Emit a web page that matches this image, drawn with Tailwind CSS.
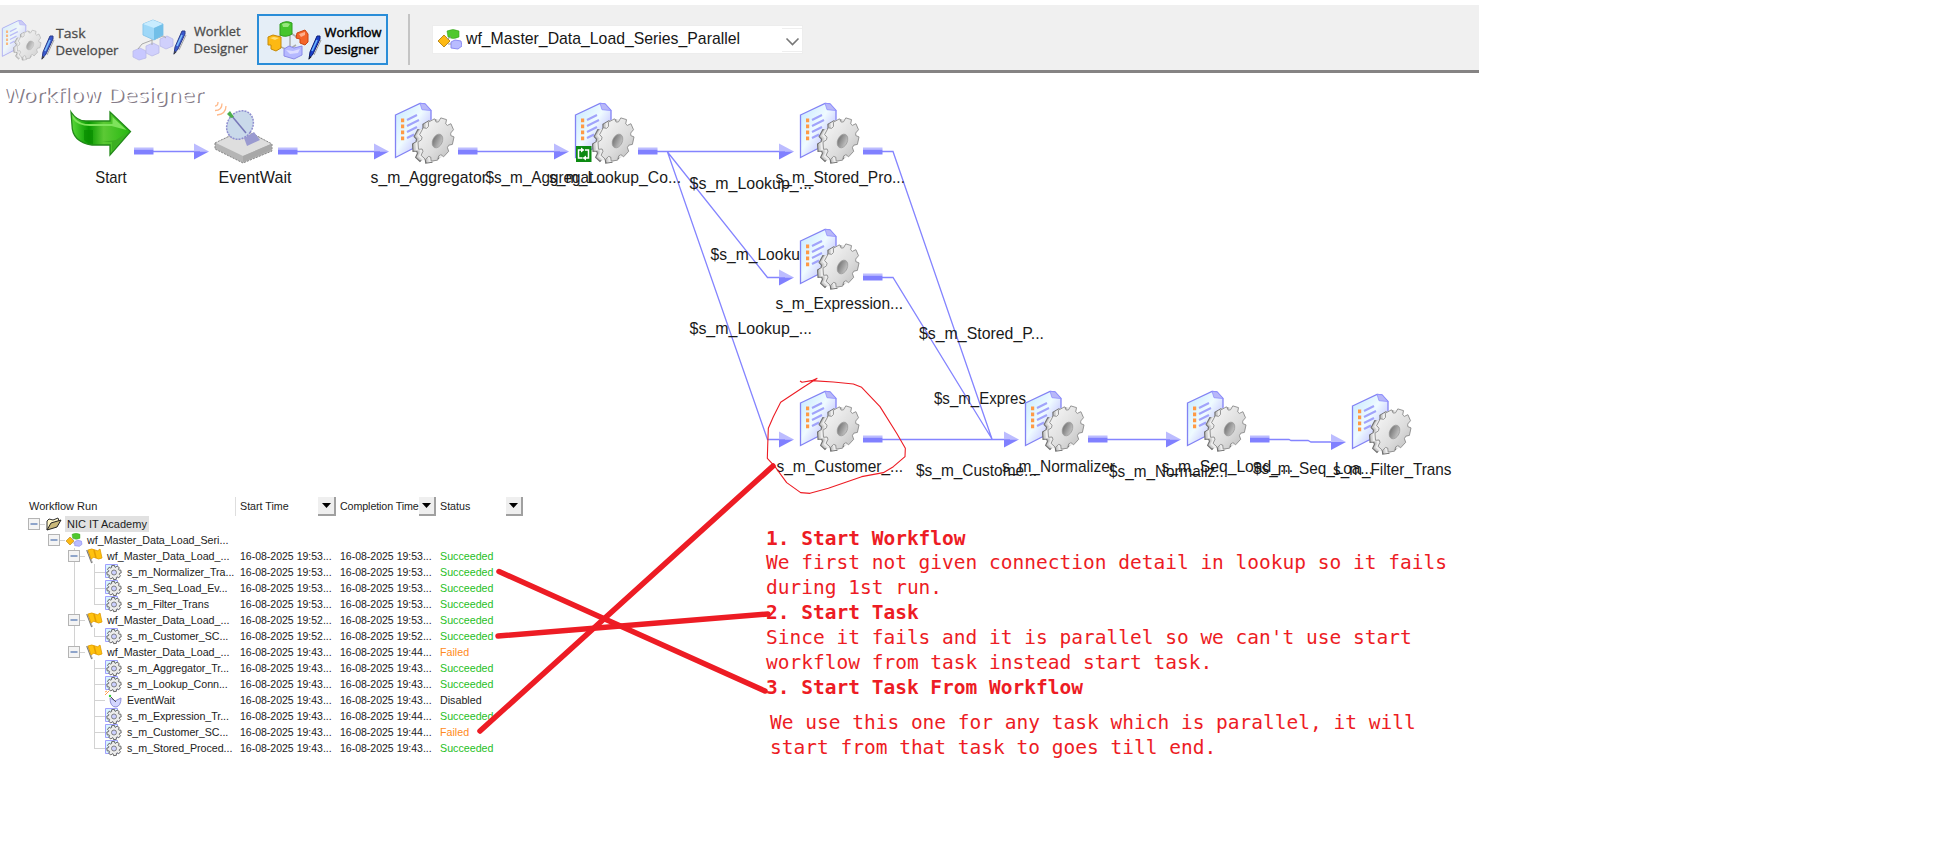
<!DOCTYPE html>
<html lang="en">
<head>
<meta charset="utf-8">
<title>Workflow Designer</title>
<script src="https://cdn.jsdelivr.net/npm/@tailwindcss/browser@4"></script>
</head>
<body class="bg-white">
<svg class="absolute h-0 w-0" aria-hidden="true">
  <defs>
    <linearGradient id="sheet" x1="0" y1="0" x2="1" y2="1"><stop offset="0" stop-color="#c4e8ff"/><stop offset=".45" stop-color="#effbff"/><stop offset=".75" stop-color="#c4c4ff"/><stop offset="1" stop-color="#d0d0ff"/></linearGradient>
    <linearGradient id="face" x1="0" y1="0" x2="1" y2="1"><stop offset="0" stop-color="#fafafa"/><stop offset=".6" stop-color="#dcdcdc"/><stop offset="1" stop-color="#b9b9b9"/></linearGradient>
    <linearGradient id="hole" x1="0" y1="0" x2="1" y2="0"><stop offset="0" stop-color="#777"/><stop offset="1" stop-color="#c4c4c4"/></linearGradient>
    <linearGradient id="arrowG" x1="0" y1="0" x2="1" y2="0"><stop offset="0" stop-color="#5ddb3c"/><stop offset=".3" stop-color="#089a00"/><stop offset=".55" stop-color="#5cc935"/><stop offset="1" stop-color="#25b80f"/></linearGradient>
    <symbol id="task" viewBox="0 0 62 62" overflow="visible">
      <path d="M.5 12.500 25 .8l5 .6 6 6.600v26L17 46.500.5 55z" fill="url(#sheet)" stroke="#8282f4" stroke-width="1.300"/>
      <path d="M25 .8l2 6.400 9 .8-6-6.600z" fill="#b8b8f8" stroke="#9090ff" stroke-width=".8"/>
      <path d="M12 17.500l10-5M12 23.500l12-6M12 29.500l10-5M12 35.500l7-3.500" stroke="#a0a3fb" stroke-width="2"/>
      <path d="M6 16h3.200v3.800H6zM6 22h3.200v3.800H6zM6 28h3.200v3.800H6zM6 34h3.200v3.800H6z" fill="#ff9a45"/>
      <path class="gearp" transform="translate(35.500 39)" fill="#bcbcbc" stroke="#707070" stroke-width="1.100"/>
      <path class="gearp" transform="translate(37 38.500)" fill="#d4d4d4"/>
      <path class="gearp" transform="translate(38.500 38)" fill="#eeeeee"/>
      <path class="gearp" transform="translate(41 37)" fill="url(#face)" stroke="#8a8a8a" stroke-width=".9"/>
      <ellipse cx="42.500" cy="38.500" rx="4.800" ry="7.200" transform="rotate(25 42.500 38.500)" fill="url(#hole)" stroke="#999" stroke-width=".7"/>
    </symbol>
    <symbol id="pen" viewBox="0 0 14 26" overflow="visible">
      <path d="M2 25l1-7L10 2l3 0 0 3L6 20z" fill="#1a3fc8" stroke="#0c1e78" stroke-width="1"/>
      <path d="M5 17l5-11" stroke="#6ab8ff" stroke-width="1.600"/><path d="M1.500 26l1-4 2 1z" fill="#222"/><path d="M7 21l7-15" stroke="#999" stroke-width="1"/>
    </symbol>
    <symbol id="wf" viewBox="0 0 24 21" overflow="visible">
      <path d="M9 2q6-3 12 0v6q-6 3-11 0z" fill="#4fc82e" stroke="#37a51d" stroke-width=".6"/>
      <path d="M0 12l6-6 6 6-6 6z" fill="#fdb913" stroke="#a97505" stroke-width=".8"/>
      <path d="M13 13l4-2 6 1 1 5-4 3-7-1z" fill="#b9bcff" stroke="#8585f0" stroke-width=".9"/><path d="M9 10l4-2M10 15l3 0" stroke="#999"/>
    </symbol>
    <symbol id="gearS" viewBox="0 0 16 16" overflow="visible">
      <path d="M.5.500h12v13H.5z" fill="#d9f3ff" stroke="#a0a0ff" stroke-width="1"/>
      <path class="gears" transform="translate(9 8.500)" fill="#ececec" stroke="#666" stroke-width="1" stroke-linejoin="round"/>
      <circle cx="9" cy="8.500" r="2.500" fill="#ccd0ff" stroke="#777" stroke-width=".9"/>
    </symbol>
    <symbol id="flag" viewBox="0 0 16 16" overflow="visible">
      <path d="M1 2l5 13" stroke="#777" stroke-width="1.800"/><path d="M1.500 2l5 13" stroke="#ddd" stroke-width=".6"/>
      <path d="M2 2q4-2 7 0t5-1l2 9q-4 2-6 0t-5 1z" fill="#ffc20e" stroke="#e09a00" stroke-width=".8"/><path d="M8 2l2 8" stroke="#e59f00" stroke-width="1.500"/>
    </symbol>
    <symbol id="folder" viewBox="0 0 16 14" overflow="visible">
      <path d="M1 13V4l2-2 4 1 5-2 1 3" fill="#fff6c8" stroke="#333"/><path d="M1 13L5 6l10-3-4 7z" fill="#c9b87a" stroke="#222"/>
    </symbol>
    <symbol id="dish" viewBox="0 0 16 16" overflow="visible">
      <path d="M0 0l2-1M0 3l4-4" stroke="#ffa04d"/><path d="M5 6q0 9 6 9 5-1 5-9l-6 3z" fill="#d3d6ff" stroke="#8d8dd8"/><path d="M6 5l5 5" stroke="#555"/><circle cx="5" cy="4" r="1.200" fill="#3c3"/>
    </symbol>
  </defs>
</svg>

<div class="relative h-[847px] w-[1933px] overflow-hidden bg-white pt-[5px]">
  <header class="flex h-[68px] w-[1479px] items-start border-b-[3px] border-[#858383] bg-[#f0f0f0]" style="font-family:'Open Sans',sans-serif">
    <svg class="h-[65px] w-[125px]" viewBox="0 5 125 65">
      <g opacity=".65"><use href="#task" x="2" y="20" width="41" height="41"/></g>
      <use href="#pen" x="40" y="34" width="14" height="26" opacity=".85"/>
      <g font-size="13" fill="#4c4c4c" stroke="#4c4c4c" stroke-width=".3"><text x="56" y="38" textLength="29.500" lengthAdjust="spacingAndGlyphs">Task</text><text x="55.500" y="55" textLength="63" lengthAdjust="spacingAndGlyphs">Developer</text></g>
    </svg>
    <svg class="h-[65px] w-[132px]" viewBox="125 5 132 65">
      <g stroke="#b9b9e8" stroke-width=".8"><path d="M133 51l7-3 6 3v7l-7 2-6-3z" fill="#c8c8ff"/><path d="M146 46l7-3 6 3v7l-7 3-6-3z" fill="#d0d0fc"/><path d="M160 39l7-3 6 3v7l-7 3-6-3z" fill="#d0d0fc"/></g>
      <path d="M138 49l4-5 13-5 8-3M152 45v-6M166 38l-4-3" stroke="#aaa" fill="none"/>
      <path d="M143 24l10-4 10 4v11l-9 5-11-5z" fill="#9fd8f8" stroke="#8cc8ec"/><path d="M143 24l11 4 9-4-10-4z" fill="#c8ecff"/><path d="M154 28v12l9-5V24z" fill="#72bfe8"/>
      <use href="#pen" x="172" y="29" width="14" height="26" opacity=".85"/>
      <g font-size="13" fill="#4c4c4c" stroke="#4c4c4c" stroke-width=".3"><text x="194" y="36" textLength="46.500" lengthAdjust="spacingAndGlyphs">Worklet</text><text x="193.500" y="52.500" textLength="54.500" lengthAdjust="spacingAndGlyphs">Designer</text></g>
    </svg>
    <svg class="mt-[9px] h-[51px] w-[131px] border-2 border-[#2a8dd8] bg-[#e5eef7]" viewBox="259 16 127 47">
      <path d="M278 37l9-6 10 6M290 33v15M276 45l12 5 8-5" stroke="#aaa" stroke-width="1.500" fill="none"/>
      <path d="M280 24q6-4 12-1v11q-6 4-12 1z" fill="#45c52c" stroke="#2f9c1c"/><path d="M282 24q4-2 8 0l-2 3-5 0z" fill="#97e77f"/>
      <path d="M268 37l5-2 8 2v11l-5 3-5-2v-4l-3 0z" fill="#fdb913" stroke="#c58a08"/><path d="M270 38l4-1 5 1-4 2z" fill="#ffe07a"/>
      <path d="M297 33l8-3 3 4v8l-3 3-5-2v-4l-4-1z" fill="#f4652a" stroke="#c94514"/><path d="M299 34l6-2v3l-4 2z" fill="#ffb08e"/>
      <path d="M284 49l5-3 5 2 8-2v9l-8 4-10-3z" fill="#b5b8ff" stroke="#8a8ae8"/><path d="M286 50l7 1 7-2-2 4-8 1z" fill="#dcdcff"/>
      <use href="#pen" x="307" y="34" width="14" height="26"/>
      <g font-size="13" fill="#000" stroke="#000" stroke-width=".45"><text x="324.500" y="36.500" textLength="57" lengthAdjust="spacingAndGlyphs">Workflow</text><text x="324" y="53.500" textLength="55" lengthAdjust="spacingAndGlyphs">Designer</text></g>
    </svg>
    <div class="mt-[9px] ml-5 h-[51px] w-[2px] bg-[#c4c4c4]"></div>
    <div class="mt-[20px] ml-[22px] flex h-[29px] w-[371px] items-center border border-[#ededed] bg-white pl-[5px]">
      <svg class="h-[21px] w-[24px] shrink-0"><use href="#wf" width="24" height="21"/></svg>
      <svg class="ml-[4px] h-[25px] w-[280px] shrink-0 overflow-visible" viewBox="0 0 280 25"><text x="0" y="17" font-family="Liberation Sans, sans-serif" font-size="17" fill="#161616" textLength="274" lengthAdjust="spacingAndGlyphs">wf_Master_Data_Load_Series_Parallel</text></svg>
      <svg class="ml-auto h-[24px] w-[20px]" viewBox="0 0 20 24" fill="none"><path d="M0 .5h20M0 23.500h20" stroke="#eee"/><path d="M4.500 10.500l6 6 6-6" stroke="#777" stroke-width="1.600"/></svg>
    </div>
  </header>

  <svg id="diagram" class="block h-[419px] w-[1479px]" viewBox="0 73 1479 419" font-family="Liberation Sans, sans-serif" font-size="17"></svg>

  <section class="flex">
    <div class="w-[766px] pt-[5px] pl-[28px] text-[10.7px] leading-[16px] text-[#1c1c1c]" style="font-family:'Liberation Sans',sans-serif">
      <div class="flex h-[18px] w-[495px] items-center whitespace-nowrap">
        <div class="w-[207px] pl-px text-[11px]">Workflow Run</div>
        <div class="flex h-[19px] w-[101px] items-center border-l border-[#dedede] pl-[4px]">Start Time<span class="ml-auto flex h-[19px] w-[18px] items-center justify-center border-r-2 border-b-2 border-[#a0a0a0] bg-[#efefef]"><svg class="h-[5px] w-[9px]" viewBox="0 0 9 5"><path d="M0 0h9L4.500 5z"/></svg></span></div>
        <div class="flex h-[19px] w-[100px] items-center pl-[4px] tracking-[-0.1px]">Completion Time<span class="ml-auto flex h-[19px] w-[17px] shrink-0 items-center justify-center border-r-2 border-b-2 border-[#a0a0a0] bg-[#efefef]"><svg class="h-[5px] w-[9px]" viewBox="0 0 9 5"><path d="M0 0h9L4.500 5z"/></svg></span></div>
        <div class="flex h-[19px] w-[87px] items-center pl-[4px]">Status<span class="ml-auto flex h-[19px] w-[17px] items-center justify-center border-r-2 border-b-2 border-[#a0a0a0] bg-[#efefef]"><svg class="h-[5px] w-[9px]" viewBox="0 0 9 5"><path d="M0 0h9L4.500 5z"/></svg></span></div>
      </div>
      <div id="rows" class="pt-px"></div>
    </div>
    <div class="pt-[34.5px] text-[19.5px] leading-[24.9px] whitespace-nowrap text-[#ed1c24]" style="font-family:'DejaVu Sans Mono',monospace">
      <p class="font-bold">1. Start Workflow</p>
      <p>We first not given connection detail in lookup so it fails</p>
      <p>during 1st run.</p>
      <p class="font-bold">2. Start Task</p>
      <p>Since it fails and it is parallel so we can't use start</p>
      <p>workflow from task instead start task.</p>
      <p class="font-bold">3. Start Task From Workflow</p>
      <p class="mt-[10px] pl-[4px]">We use this one for any task which is parallel, it will</p>
      <p class="pl-[4px]">start from that task to goes till end.</p>
    </div>
  </section>

  <svg class="pointer-events-none absolute top-0 left-0 h-[847px] w-[1933px]" fill="none" stroke="#ed1c24">
    <g stroke-width="5.500" stroke-linecap="round"><path d="M499 571.500L765 691"/><path d="M498 636L768 614"/><path d="M480 731L773 466"/></g>
    <path transform="translate(680 300) scale(.33333)" stroke-width="3.300" stroke-linejoin="round" d="M360 243l6 4 29-5 17-7M412 235L370 262 302 307 280 350 265 385 263 440 262 475 285 500 320 548 362 578 390 580 445 565 545 530 610 518 640 500 675 470 676 445 650 400 600 320 545 262 520 252 460 246 395 242"/>
  </svg>
</div>

<script>
// Gear outline: a slanted ellipse with trapezoid teeth.
const gear = (n, rx, ry, deg, inner) => {
  const a = deg * Math.PI / 180, pts = [];
  for (let i = 0; i < n; i++) for (const [f, r] of [[0, inner], [.2, inner], [.34, 1], [.84, 1], [.98, inner]]) {
    const t = (i + f) / n * 2 * Math.PI, x = rx * r * Math.cos(t), y = ry * r * Math.sin(t);
    pts.push((x * Math.cos(a) - y * Math.sin(a)).toFixed(1) + ' ' + (x * Math.sin(a) + y * Math.cos(a)).toFixed(1));
  }
  return 'M' + pts.join('L') + 'z';
};
document.querySelectorAll('.gearp').forEach(p => p.setAttribute('d', gear(9, 17, 22.5, 25, .82)));
document.querySelectorAll('.gears').forEach(p => p.setAttribute('d', gear(8, 7.2, 7.2, 10, .76)));

const text = (s, x1, x2, y) => `<text x="${x1}" y="${y}" fill="#1a1a1a" textLength="${x2 - x1}" lengthAdjust="spacingAndGlyphs">${s}</text>`;
const bar = (x, y) => `<path d="M${x} ${y - 4}h19.500v2h-19.500z" fill="#bcbcff"/><path d="M${x} ${y - 2}h19.500v5h-19.500z" fill="#8080ff"/>`;
const head = (x, y) => `<path d="M${x} ${y - 8}L${x + 15} ${y}H${x}z" fill="#bcbcff"/><path d="M${x} ${y}H${x + 15}L${x} ${y + 8}z" fill="#8080ff"/>`;
const task = (x, y) => `<use href="#task" x="${x}" y="${y}" width="62" height="62"/>`;

const links = `<g fill="none" stroke="#8484ff" stroke-width="1.300">
  <path d="M153 151.500H200M297 151.500H380M477 151.500H560M657 151.500H785M667.500 152L767.500 277.500H785M667.500 152L767.500 439.500H785M882 151.500H893L992 439M882 277.500H893L992 439M882 439.500H1010M1107 439.500H1170M1269 439.500H1289L1291 440.500H1308L1311 442H1335"/></g>`;
const bars = [[134,151.5],[278,151.5],[458,151.5],[638,151.5],[863,151.5],[863,277.5],[863,439.5],[1088,439.5],[1250,439.5]].map(p => bar(...p)).join('');
const heads = [[194,151.5],[374,151.5],[554,151.5],[779,151.5],[779,277.5],[779,439.5],[1004,439.5],[1166,439.5],[1331,442]].map(p => head(...p)).join('');
const linkLabels = [['$s_m_Aggregat...',485.5,606,183],['$s_m_Lookup_...',689.5,812,189],['$s_m_Looku',710.5,800,260],['$s_m_Lookup_...',689.5,812,334],['$s_m_Stored_P...',919,1044,339],['$s_m_Expres',934,1026,404],['$s_m_Custome...',916,1037,476],['$s_m_Normaliz...',1109,1228,477],['$s_m_Seq_Loa...',1253,1373,474]];
const nodeLabels = [['Start',95.3,126.7,183],['EventWait',218.5,291.5,183],['s_m_Aggregator',370.5,487,183],['s_m_Lookup_Co...',549,681,183],['s_m_Stored_Pro...',775.5,905,183],['s_m_Expression...',775.5,903,309],['s_m_Customer_...',776.5,903,472],['s_m_Normalizer',1002,1115,472],['s_m_Seq_Load_...',1161.5,1293,472],['s_m_Filter_Trans',1333,1451.5,475]];
const startIcon = `<path d="M71 112q6 9 15 9h24v-9l20.500 19.500L110 155v-10H92q-20-3-20-20z" fill="url(#arrowG)" stroke="#23891a" stroke-width="1.300"/><path d="M72.500 115q5 8 13 9h27v-7l14 13-15-4H90q-12 0-17-7z" fill="#7ee35b"/><path d="M84 130h9v14q-6-1-9-4z" fill="#088c00" opacity=".7"/><path d="M112 151v-9h-10l14-2 12-8z" fill="#3cae22"/>`;
const dish = `<path d="M215 143l29-14 28 15v7l-29 12-28-14z" fill="#b5b5b5" stroke="#858585" stroke-width="1" stroke-dasharray="2 1.200"/><path d="M216 143l28-13 27 14-28 12z" fill="#dedede"/><path d="M243 156l28-12v6l-28 12z" fill="#a8a8a8"/><path d="M244 138l10-6 6 8-13 6z" fill="#9a9ad0"/><ellipse cx="240" cy="125" rx="12.500" ry="15" transform="rotate(35 240 125)" fill="#c9d9ea" stroke="#8d8dcf" stroke-width="1.500" stroke-dasharray="2 1"/><path d="M231 115l15 18" stroke="#7777b8" stroke-width="1.500"/><path d="M227 114l3-3 4 6-3 1z" fill="#4cae4c"/><path d="M215 106q3 0 3-4M215 110.500q7 0 7-7M217 115q9-1 9-9" fill="none" stroke="#ffb98a" stroke-width="1.300"/>`;
const restart = `<g><rect x="576" y="146" width="15.500" height="16" fill="#0c8a12"/><path d="M582 150h-3.500v8h4M585 150h3.500v8h-4" fill="none" stroke="#fff" stroke-width="1.500"/><path d="M581 147.500l3.500 2.500-3.500 2.500zM586 155.500l-3.500 2.500 3.500 2.500z" fill="#fff"/></g>`;
const title = `<text x="3" y="102" font-family="DejaVu Sans, sans-serif" font-size="20" textLength="200" lengthAdjust="spacingAndGlyphs" fill="#fff" style="text-shadow:1.500px 1.200px .6px #857c88">Workflow Designer</text>`;
document.getElementById('diagram').innerHTML = title + links + bars + heads
  + linkLabels.map(l => text(...l)).join('') + nodeLabels.map(l => text(...l)).join('') + startIcon + dish
  + [[395,102.5],[575,102.5],[800,102.5],[800,228.5],[800,390.5],[1025,390.5],[1187,390.5],[1352,393.5]].map(p => task(...p)).join('') + restart;

// [depth, icon, name, start, completion, status]
const data = [
  [0,'folder','NIC IT Academy'],
  [1,'wf','wf_Master_Data_Load_Seri...'],
  [2,'flag','wf_Master_Data_Load_...','19:53','19:53','Succeeded'],
  [3,'gearS','s_m_Normalizer_Tra...','19:53','19:53','Succeeded'],
  [3,'gearS','s_m_Seq_Load_Ev...','19:53','19:53','Succeeded'],
  [3,'gearS','s_m_Filter_Trans','19:53','19:53','Succeeded'],
  [2,'flag','wf_Master_Data_Load_...','19:52','19:53','Succeeded'],
  [3,'gearS','s_m_Customer_SC...','19:52','19:52','Succeeded'],
  [2,'flag','wf_Master_Data_Load_...','19:43','19:44','Failed'],
  [3,'gearS','s_m_Aggregator_Tr...','19:43','19:43','Succeeded'],
  [3,'gearS','s_m_Lookup_Conn...','19:43','19:43','Succeeded'],
  [3,'dish','EventWait','19:43','19:43','Disabled'],
  [3,'gearS','s_m_Expression_Tr...','19:43','19:44','Succeeded'],
  [3,'gearS','s_m_Customer_SC...','19:43','19:44','Failed'],
  [3,'gearS','s_m_Stored_Proced...','19:43','19:43','Succeeded'],
];
const tone = { Succeeded: 'text-[#1fc01f]', Failed: 'text-[#ff8a22]', Disabled: 'text-[#1c1c1c]' };
document.getElementById('rows').innerHTML = data.map(([d, icon, name, s, c, st], i) => {
  const w = 37 + d * 20, bx = d * 20;
  const last = !data[i + 1] || data[i + 1][0] < d;
  let g = '';
  if (d === 3) {
    g += `<path d="M66.500 0V${last ? 8 : 16}M66 8.500H77" stroke="#d2d2d2"/>`;
    if (i < 8) g += '<path d="M46.500 0V16" stroke="#d2d2d2"/>';
  } else {
    if (d === 2) g += `<path d="M46.500 0V${i < 8 ? 16 : 8}" stroke="#d2d2d2"/>`;
    g += `<path d="M${bx + 11} 8.500h6" stroke="#d2d2d2"/><rect x="${bx + .5}" y="2.500" width="11" height="11" fill="#f4f4f4" stroke="#b4b4b4"/><path d="M${bx + 2.5} 8h7" stroke="#4a6fae" stroke-width="1.200"/>`;
  }
  g += `<use href="#${icon}" x="${bx + (d === 3 ? 17 : 18)}" y="${icon === 'folder' ? 1 : 0}" width="16" height="${icon === 'folder' ? 14 : 16}"/>`;
  const stamp = t => t ? '16-08-2025 ' + t + '...' : '';
  return `<div class="grid h-[16px] grid-cols-[212px_100px_100px_90px] whitespace-nowrap">
    <div class="flex"><svg class="h-[16px] shrink-0 overflow-visible" style="width:${w}px">${g}</svg><span class="${d === 0 ? 'bg-[#e1e1e1] pr-[2px] pl-[2px] text-[11px]' : d === 3 ? 'pl-[2px] tracking-[-0.05px]' : 'pl-[2px]'}">${name}</span></div>
    <div class="text-[10.5px]">${stamp(s)}</div><div class="text-[10.5px]">${stamp(c)}</div><div class="${tone[st] || ''}">${st || ''}</div></div>`;
}).join('');
</script>
</body>
</html>
